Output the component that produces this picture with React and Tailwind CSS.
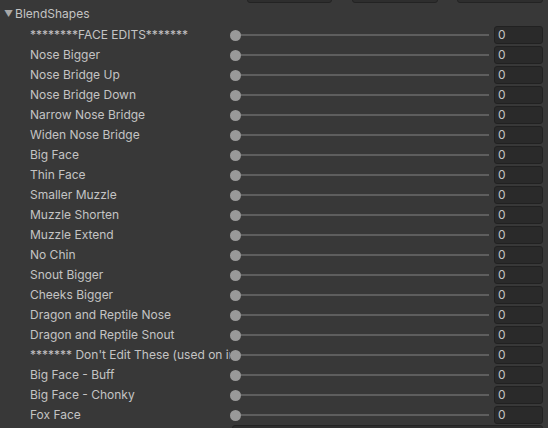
import React from 'react';

const shapes = [
    '********FACE EDITS*******',
    'Nose Bigger',
    'Nose Bridge Up',
    'Nose Bridge Down',
    'Narrow Nose Bridge',
    'Widen Nose Bridge',
    'Big Face',
    'Thin Face',
    'Smaller Muzzle',
    'Muzzle Shorten',
    'Muzzle Extend',
    'No Chin',
    'Snout Bigger',
    'Cheeks Bigger',
    'Dragon and Reptile Nose',
    'Dragon and Reptile Snout',
    "******* Don't Edit These (used on in-game sliders) *******",
    'Big Face - Buff',
    'Big Face - Chonky',
    'Fox Face',
];

const SliderRow = ({ label }) => (
    <div className="flex items-center h-[20px]">
        <div className="w-[230px] pl-[30px] whitespace-nowrap overflow-hidden text-[12px] text-[#c4c4c4] leading-[20px]">
            {label}
        </div>
        <div className="relative flex items-center w-[259px] h-full">
            <div className="h-[2px] w-full bg-[#5e5e5e] ml-[2px]"></div>
            <div className="absolute left-0 w-[11px] h-[11px] rounded-full bg-[#999999]"></div>
        </div>
        <div className="ml-[5px] w-[49px] h-[18px] rounded-[3px] bg-[#2a2a2a] border border-[#212121] flex items-center pl-[3px] text-[12px] text-[#c4c4c4] leading-[16px]">
            0
        </div>
    </div>
);

const App = () => {
    return (
        <div
            className="w-[548px] h-[428px] bg-[#383838] overflow-hidden"
            style={{ fontFamily: 'Inter, "Noto Sans", sans-serif' }}
        >
            <div className="flex h-[3px] overflow-visible">
                <div className="ml-[247px] w-[85px] h-[20px] -mt-[17px] rounded-[3px] bg-[#2e2e2e] border border-[#232323]"></div>
                <div className="ml-[20px] w-[86px] h-[20px] -mt-[17px] rounded-[3px] bg-[#2e2e2e] border border-[#232323]"></div>
                <div className="ml-[19px] w-[86px] h-[20px] -mt-[17px] rounded-[3px] bg-[#2e2e2e] border border-[#232323]"></div>
            </div>
            <div className="flex items-center h-[22px] pl-[4px] text-[12px] text-[#c4c4c4] leading-[20px]">
                <span className="text-[9px] text-[#a8a8a8] mr-[2px]">▼</span>
                <span>BlendShapes</span>
            </div>
            <div className="flex flex-col">
                {shapes.map((s) => (
                    <SliderRow key={s} label={s} />
                ))}
            </div>
            <div className="ml-[232px] w-[311px] h-[20px] rounded-[3px] bg-[#2e2e2e] border border-[#232323]"></div>
        </div>
    );
};

export default App;
